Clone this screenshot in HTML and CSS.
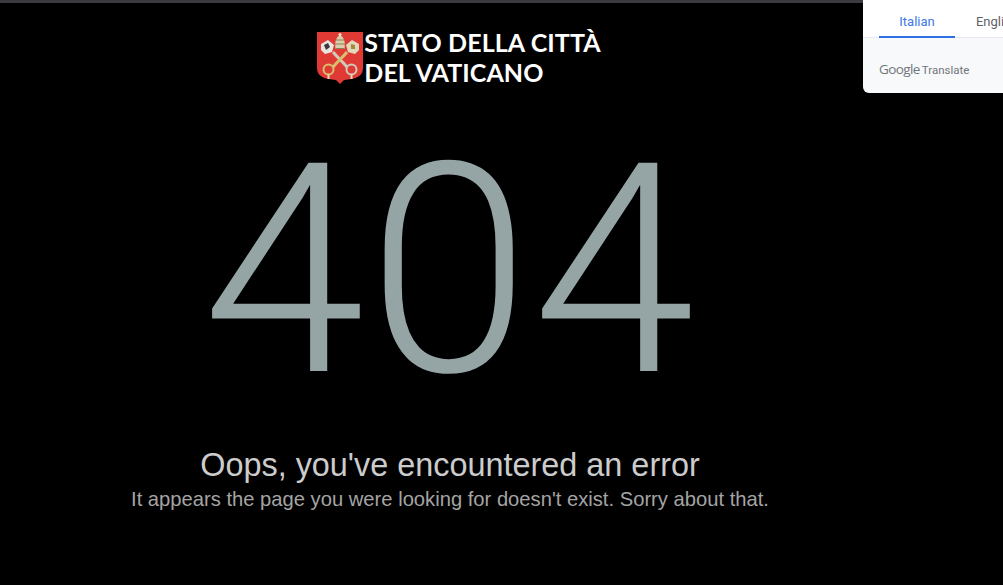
FILE: index.html
```html
<!DOCTYPE html>
<html lang="en">
<head>
    <meta charset="UTF-8">
    <title>Stato della Città del Vaticano │ 404</title>
    <link rel="stylesheet" href="styles.css">
</head>
<body>
    <div class="top-line"></div>

    <div class="container">
        <a href="#" class="brand">
            <svg class="crest" viewBox="0 0 46 52" width="46" height="52" aria-hidden="true">
                <path d="M0 0H46V36C46 45 38 47 27 48L23 52L19 48C8 47 0 45 0 36Z" fill="#e03a35"/>
                <!-- tiara -->
                <path d="M18.500 17C17.500 10 19 5 23 3C27 5 28.500 10 27.500 17Z" fill="#d8cfae"/>
                <path d="M18.500 8H27.500M18 12H28M18.500 16.500H27.500" stroke="#8f7f55" stroke-width="1.200"/>
                <circle cx="23" cy="2.500" r="1.500" fill="#efe8d2"/>
                <!-- ribbons -->
                <path d="M4 12L11 8L17 13L15 20L8 22L4 18Z" fill="#e8e6df"/>
                <path d="M7 13L11 11L13 15L9 18Z" fill="#3c3a3a"/>
                <path d="M29 13L35 8L42 12L42 18L38 22L31 20Z" fill="#e2d9bd"/>
                <path d="M34 12L38 13L38 17L34 17Z" fill="#a08a3c"/>
                <!-- keys -->
                <path d="M16 20C20 25 24 28 30 35" stroke="#cfcabb" stroke-width="3" fill="none"/>
                <path d="M30 20C26 25 22 28 16 35" stroke="#d9bf6c" stroke-width="3" fill="none"/>
                <circle cx="11.500" cy="37.500" r="5" fill="none" stroke="#d9bf6c" stroke-width="2"/>
                <circle cx="34.500" cy="37.500" r="5" fill="none" stroke="#cfcabb" stroke-width="2"/>
                <path d="M11.500 42.500V47M34.500 42.500V47" stroke="#e2d9bd" stroke-width="2"/>
            </svg>
            <span class="brand-name">STATO DELLA CITTÀ<br>DEL VATICANO</span>
        </a>

        <div class="error-code">404</div>
        <h1 class="error-title">Oops, you've encountered an error</h1>
        <p class="error-text">It appears the page you were looking for doesn't exist. Sorry about that.</p>
    </div>

    <div class="translate-box">
        <div class="lang-tabs">
            <a href="#" class="lang-tab active">Italian</a>
            <a href="#" class="lang-tab">English</a>
        </div>
        <div class="translate-footer">
            <span class="google-word">Google</span>
            <span class="translate-word">Translate</span>
        </div>
    </div>
</body>
</html>
```

FILE: styles.css
```css
/* Page */
html, body {
    height: 100%;
}

body {
    margin: 0;
    background-color: #000;
    color: #fff;
    font-family: "Liberation Sans", Arial, sans-serif;
    overflow: hidden;
}

.top-line {
    height: 3px;
    background-color: #3c3c40;
}

.container {
    width: 900px;
    display: flex;
    flex-direction: column;
    align-items: center;
}

/* Logo */
.brand {
    display: flex;
    align-items: flex-start;
    gap: 1px;
    margin-top: 29px;
    margin-left: 18px;
    color: #fff;
    text-decoration: none;
}

.brand-name {
    font-family: Lato, sans-serif;
    font-weight: 700;
    font-size: 25px;
    line-height: 30px;
    margin-top: -5px;
    letter-spacing: 0.1px;
}

/* Error */
.error-code {
    font-family: Roboto, sans-serif;
    font-weight: 300;
    font-size: 293px;
    line-height: 340px;
    letter-spacing: 2.500px;
    margin-top: 14px;
    color: #95a5a6;
}

.error-title {
    margin: 5px 0 0;
    font-weight: normal;
    font-size: 32.400px;
    line-height: 38px;
    color: #cccccc;
}

.error-text {
    margin: 0;
    font-size: 20.200px;
    line-height: 30px;
    color: #a4a4a4;
}

/* Translate popup */
.translate-box {
    position: absolute;
    top: 0;
    right: 0;
    width: 140px;
    height: 93px;
    background-color: #f8f9fa;
    border-bottom-left-radius: 6px;
    overflow: hidden;
}

.lang-tabs {
    display: flex;
    height: 38px;
    padding-left: 16px;
    background-color: #fff;
    border-bottom: 1px solid #e8eaed;
    box-sizing: border-box;
}

.lang-tab {
    flex: none;
    width: 84px;
    height: 38px;
    box-sizing: border-box;
    padding-top: 14px;
    text-align: center;
    font-family: Roboto, sans-serif;
    font-size: 13px;
    color: #5f6368;
    text-decoration: none;
}

.lang-tab.active {
    width: 76px;
    color: #3b78e7;
    border-bottom: 2px solid #2f6fe4;
}

.translate-footer {
    display: flex;
    align-items: baseline;
    gap: 2px;
    padding: 23px 0 0 16px;
    color: #70757a;
    line-height: 16px;
}

.google-word {
    font-family: "Open Sans", sans-serif;
    font-size: 13.500px;
    letter-spacing: -0.6px;
}

.translate-word {
    font-family: Roboto, sans-serif;
    font-size: 11.500px;
}
```
